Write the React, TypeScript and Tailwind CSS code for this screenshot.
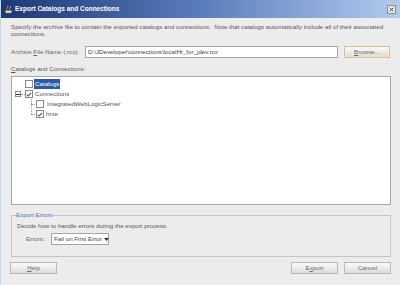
import React from "react";

const font = { fontFamily: '"Liberation Sans", Arial, sans-serif' };

function CheckBox({ checked }: { checked?: boolean }) {
  return (
    <span className="relative flex h-[8px] w-[8px] shrink-0 items-center justify-center border border-[#8a8a8a] bg-white">
      {checked && (
        <svg viewBox="0 0 8 8" className="h-[7px] w-[7px]">
          <path d="M1.2 4.2 L3 6 L6.8 1.8" fill="none" stroke="#2a4f9a" strokeWidth="1.4" />
        </svg>
      )}
    </span>
  );
}

function Button({ label, className = "" }: { label: React.ReactNode; className?: string }) {
  return (
    <div
      className={`flex h-[12px] items-center justify-center border border-[#b9b9b9] bg-gradient-to-b from-[#fbfbfb] to-[#dcdcdc] text-[6.2px] text-[#6a6a6a] ${className}`}
    >
      {label}
    </div>
  );
}

export default function App() {
  return (
    <div className="flex h-[285px] w-[400px] flex-col overflow-hidden border-l border-[#c8d3e6] bg-[#ececec] text-[#585858]" style={font}>
      {/* Title bar */}
      <div className="flex h-[18px] shrink-0 items-center bg-gradient-to-r from-[#1d3874] via-[#5a7dbb] to-[#b3caee] pl-[3px] pr-[4px]">
        <svg viewBox="0 0 10 10" className="mr-[2px] h-[9px] w-[9px]">
          <path d="M1 6 L9 6 L8 9 L2 9 Z" fill="#e8e8e8" stroke="#7a5a2a" strokeWidth="0.6" />
          <path d="M3 5 C3 3 5 3 4 1 M6 5 C6 3 8 3 7 1" fill="none" stroke="#f0c040" strokeWidth="0.8" />
        </svg>
        <span className="text-[6.5px] font-bold text-white">Export Catalogs and Connections</span>
        <div className="ml-auto flex h-[9px] w-[9px] items-center justify-center border border-[#8c8c8c] bg-[#e8e8e8]">
          <svg viewBox="0 0 6 6" className="h-[5px] w-[5px]">
            <path d="M1 1 L5 5 M5 1 L1 5" stroke="#333" strokeWidth="1.1" />
          </svg>
        </div>
      </div>

      {/* Body */}
      <div className="flex flex-1 flex-col pl-[10px] pr-[9px] pt-[5px]">
        <p className="text-[6.2px] leading-[7px]">
          Specify the archive file to contain the exported catalogs and connections.&nbsp; Note that catalogs automatically include all of their associated connections.
        </p>

        <div className="mt-[9px] flex h-[12px] items-center">
          <span className="w-[74px] whitespace-nowrap text-[6.2px] text-[#666]">
            Archive <span className="underline">F</span>ile Name (.rcx):
          </span>
          <div className="flex h-[12px] w-[253px] items-center whitespace-nowrap border border-[#a5a5a5] bg-white pl-[2px] text-[6.2px] text-[#444]">
            D:\JDeveloper\connections\localHr_for_jdev.rcx
          </div>
          <Button
            className="ml-[6px] w-[46px] border-[#e0c27a]"
            label={
              <>
                <span className="underline">B</span>rowse...
              </>
            }
          />
        </div>

        <div className="mt-[7px] text-[6.2px] leading-[8px]">
          <span className="underline">C</span>atalogs and Connections:
        </div>

        {/* Tree */}
        <div className="mt-[3px] h-[129px] border border-[#a8a8a8] bg-white pl-[3px] pt-[2px] text-[6.2px] text-[#555]">
          <div className="flex h-[10px] items-center pl-[10px]">
            <CheckBox />
            <span className="ml-[1px] bg-[#2c5aa8] px-[1px] text-white">Catalogs</span>
          </div>
          <div className="flex h-[10px] items-center">
            <span className="flex h-[6px] w-[6px] items-center justify-center border border-[#8a8a8a] bg-white">
              <span className="h-px w-[4px] bg-[#333]" />
            </span>
            <span className="w-[4px] border-t border-dotted border-[#999]" />
            <CheckBox checked />
            <span className="ml-[2px]">Connections</span>
          </div>
          <div className="relative flex h-[10px] items-center pl-[21px]">
            <span className="absolute left-[16px] top-0 h-[15px] border-l border-dotted border-[#999]" />
            <span className="absolute left-[16px] top-[5px] w-[4px] border-t border-dotted border-[#999]" />
            <CheckBox />
            <span className="ml-[3px]">IntegratedWebLogicServer</span>
          </div>
          <div className="relative flex h-[10px] items-center pl-[21px]">
            <span className="absolute left-[16px] top-[5px] w-[4px] border-t border-dotted border-[#999]" />
            <CheckBox checked />
            <span className="ml-[2px]">hrxe</span>
          </div>
        </div>

        {/* Export Errors group */}
        <fieldset className="mt-[6px] h-[46px] border border-[#c4c4c4] pl-[5px] pr-[5px]">
          <legend className="ml-[-1px] text-[6.2px] leading-[8px] text-[#4f73b0]">Export Errors</legend>
          <p className="mt-[3px] text-[6.2px] leading-[8px]">Decide how to handle errors during the export process.</p>
          <div className="mt-[3px] flex items-center">
            <span className="ml-[9px] w-[25px] text-[6.2px] text-[#666]">Errors:</span>
            <div className="flex h-[12px] w-[58px] items-center whitespace-nowrap border border-[#a5a5a5] bg-white pl-[2px] text-[6.2px] text-[#444]">
              Fail on First Error
              <svg viewBox="0 0 6 4" className="ml-[2px] h-[3px] w-[5px] shrink-0">
                <path d="M0 0 L6 0 L3 4 Z" fill="#222" />
              </svg>
            </div>
          </div>
        </fieldset>

        {/* Buttons */}
        <div className="mt-[5px] flex items-center">
          <Button
            className="ml-[-1px] w-[47px]"
            label={
              <>
                <span className="underline">H</span>elp
              </>
            }
          />
          <Button
            className="ml-auto w-[47px]"
            label={
              <>
                E<span className="underline">x</span>port
              </>
            }
          />
          <Button className="ml-[6px] w-[47px]" label="Cancel" />
        </div>
      </div>
    </div>
  );
}
